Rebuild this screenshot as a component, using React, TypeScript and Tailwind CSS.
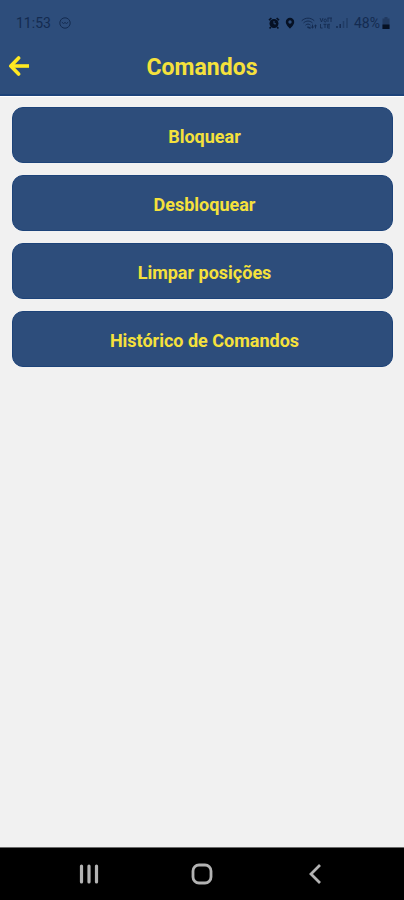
import type { ReactNode } from "react";

interface IconProps {
  className?: string;
}

const commands = [
  { id: "block", label: "Bloquear" },
  { id: "unblock", label: "Desbloquear" },
  { id: "clear", label: "Limpar posições" },
  { id: "history", label: "Histórico de Comandos" },
];

function ClockIcon({ className }: IconProps) {
  return (
    <svg viewBox="0 0 12 12" className={className} fill="none" stroke="currentColor" aria-hidden>
      <circle cx="6" cy="6" r="5.2" />
      <path d="M2.800 5.200 4.500 6.500 6 5.500 7.500 6.500 9.200 5.200" />
    </svg>
  );
}

function AlarmIcon({ className }: IconProps) {
  return (
    <svg viewBox="0 0 12 12" className={className} aria-hidden>
      <circle cx="6" cy="6.5" r="4.5" fill="currentColor" />
      <path d="M1 3.2 3.4 1M11 3.2 8.6 1M2.8 10 1.6 11.4M9.2 10l1.2 1.4" stroke="currentColor" strokeWidth="1.6" />
      <path d="M6 4v2.8h2" fill="none" stroke="#2d4d7b" />
    </svg>
  );
}

function PinIcon({ className }: IconProps) {
  return (
    <svg viewBox="0 0 12 12" className={className} aria-hidden>
      <path
        d="M6 .8A4.2 4.2 0 0 0 1.8 5C1.8 8 6 11.6 6 11.6S10.2 8 10.2 5A4.2 4.2 0 0 0 6 .8Zm0 2.5a1.7 1.7 0 1 1 0 3.4 1.7 1.7 0 0 1 0-3.4Z"
        fill="currentColor"
        fillRule="evenodd"
      />
    </svg>
  );
}

function WifiIcon({ className }: IconProps) {
  return (
    <svg viewBox="0 0 16 12" className={className} fill="none" stroke="currentColor" strokeLinecap="round" aria-hidden>
      <path d="M1 3.500C4.500.3 9.500.3 13 3.500M2.800 5.700c2.500-2.300 5.900-2.300 8.400 0M4.800 7.900c1.300-1.200 3.100-1.200 4.400 0" />
      <path d="M7 10.200 9 11" strokeWidth="1.600" />
      <path d="M11.500 8v3M10.400 9.800l1.100 1.200 1.100-1.200M14.500 11V8M13.600 9l.9-1 .9 1" />
    </svg>
  );
}

function VolteIcon({ className }: IconProps) {
  return (
    <svg viewBox="0 0 14 12" className={className} fill="none" stroke="currentColor" strokeWidth="0.9" aria-hidden>
      <path d="M1 1l1.500 4L4 1M5 3.500a1.200 1.500 0 1 0 2.400 0 1.200 1.500 0 1 0-2.400 0M9 1v4M12 1v4M8.500 1h4.500" />
      <path d="M1.500 7v4h2M4.500 7.300h3M6 7.300V11M11 7.300H8.700V11H11M8.700 9H11" />
    </svg>
  );
}

function SignalIcon({ className }: IconProps) {
  return (
    <svg viewBox="0 0 14 12" className={className} fill="none" stroke="currentColor" strokeWidth="1.5" aria-hidden>
      <path d="M2 11V9M5.200 11V7" />
      <path d="M8.500 11V4M12 11V1" opacity="0.5" />
    </svg>
  );
}

function BatteryIcon({ className }: IconProps) {
  return (
    <svg viewBox="0 0 8 12" className={className} fill="currentColor" aria-hidden>
      <path d="M2.500 0h3v1.500h2V12h-7V1.500h2Z" opacity="0.3" />
      <path d="M.5 7.500h7V12h-7Z" />
    </svg>
  );
}

function BackArrow({ className }: IconProps) {
  return (
    <svg viewBox="0 0 22 20" className={className} fill="none" stroke="currentColor" strokeWidth="3.6" aria-hidden>
      <path d="M10.600 2 2.800 10l7.800 8" strokeLinecap="round" strokeLinejoin="round" />
      <path d="M3 10h18" />
    </svg>
  );
}

function StatusBar() {
  return (
    <div className="flex h-11 items-center justify-between px-4 pr-3.5 pt-0.5 text-sm text-[#142b50]">
      <div className="flex items-center gap-2">
        <span>11:53</span>
        <ClockIcon className="h-3 w-3" />
      </div>
      <div className="flex items-center gap-[5px]">
        <div className="flex items-center gap-1 text-[#061124]">
          <AlarmIcon className="h-3 w-3" />
          <PinIcon className="h-3 w-3" />
        </div>
        <div className="flex items-center gap-0.5">
          <WifiIcon className="h-3 w-4" />
          <VolteIcon className="h-3 w-3.5" />
          <SignalIcon className="h-3 w-3.5" />
        </div>
        <div className="flex items-center gap-0.5">
          <span>48%</span>
          <BatteryIcon className="h-3 w-2 text-[#061124]" />
        </div>
      </div>
    </div>
  );
}

function CommandButton({ children }: { children: ReactNode }) {
  return (
    <button
      type="button"
      className="h-14 w-full rounded-[11px] border border-[#1d4379] bg-[#2d4d7b] pl-1 pt-1 text-lg font-bold text-[#f5e13c]"
    >
      {children}
    </button>
  );
}

function NavigationBar() {
  return (
    <nav className="grid h-[53px] grid-cols-3 border-t border-[#6b6b6b] bg-black px-8 text-[#b3b3b3]">
      <button type="button" aria-label="Recentes" className="flex items-center justify-center">
        <svg viewBox="0 0 20 20" className="h-5 w-5" stroke="currentColor" strokeWidth="3.2" strokeLinecap="round" aria-hidden>
          <path d="M2.500 2v16M10 2v16M17.500 2v16" />
        </svg>
      </button>
      <button type="button" aria-label="Início" className="flex items-center justify-center">
        <svg viewBox="0 0 22 22" className="h-[22px] w-[22px]" fill="none" stroke="currentColor" strokeWidth="2.8" aria-hidden>
          <rect x="2" y="2" width="18" height="18" rx="6" />
        </svg>
      </button>
      <button type="button" aria-label="Voltar" className="flex items-center justify-center">
        <svg viewBox="0 0 12 20" className="h-5 w-3" fill="none" stroke="currentColor" strokeWidth="2.8" aria-hidden>
          <path d="M11 1 2 10l9 9" />
        </svg>
      </button>
    </nav>
  );
}

export default function App() {
  return (
    <div className="flex min-h-screen flex-col bg-[#f1f1f1] font-['Roboto',sans-serif]">
      <header className="border-b-2 border-[#1d4379] bg-[#2d4d7b]">
        <StatusBar />
        <div className="grid h-[50px] grid-cols-[40px_1fr_40px] items-center pb-1.5">
          <button type="button" aria-label="Voltar" className="pl-2 text-[#ffe921]">
            <BackArrow className="h-5 w-[22px]" />
          </button>
          <h1 className="pt-1 text-center text-[23px] font-bold leading-7 text-[#f5e13c]">Comandos</h1>
        </div>
      </header>

      <main className="flex flex-1 flex-col gap-3 border-t border-white pl-3 pr-[11px] pt-2.5">
        {commands.map((command) => (
          <CommandButton key={command.id}>{command.label}</CommandButton>
        ))}
      </main>

      <NavigationBar />
    </div>
  );
}
